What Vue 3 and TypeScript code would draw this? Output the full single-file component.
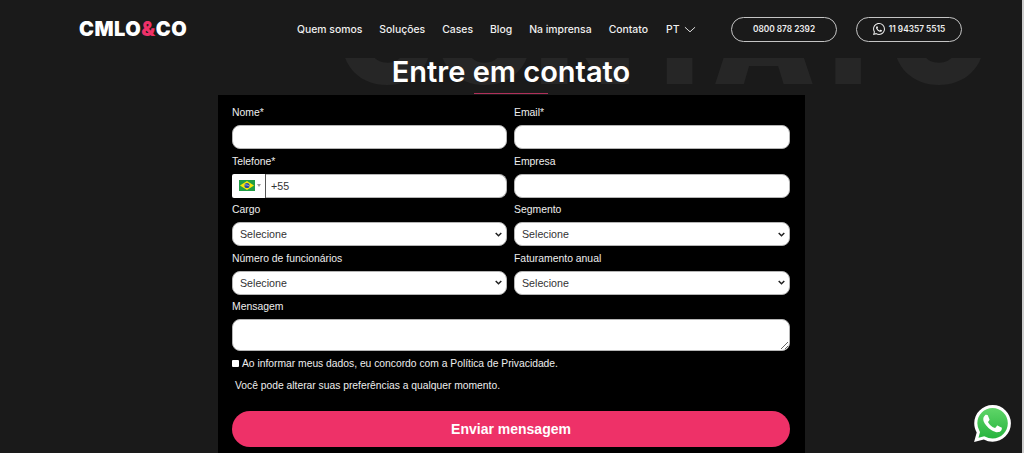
<template>
  <div class="page">
    <div class="watermark" aria-hidden="true"><span>CONTATO</span></div>

    <header class="header">
      <div class="logo">CMLO<span class="amp">&amp;</span>CO</div>
      <nav class="nav">
        <a v-for="item in navItems" :key="item">{{ item }}</a>
        <a class="lang">
          PT
          <svg width="12" height="7" viewBox="0 0 13 7" fill="none">
            <path d="M1 1L6.5 6L12 1" stroke="currentColor" stroke-width="1" />
          </svg>
        </a>
      </nav>
      <div class="phones">
        <a class="phone-btn">0800 878 2392</a>
        <a class="phone-btn">
          <svg width="12" height="12" viewBox="0 0 24 24" fill="currentColor">
            <path :d="phonePath" />
            <path :d="ringPath" />
          </svg>
          11 94357 5515
        </a>
      </div>
    </header>

    <main class="content">
      <h1 class="title">Entre em contato</h1>
      <div class="title-line"></div>

      <form class="form" @submit.prevent>
        <div class="grid">
          <div class="field">
            <label>Nome*</label>
            <input type="text" />
          </div>
          <div class="field">
            <label>Email*</label>
            <input type="email" />
          </div>
          <div class="field">
            <label>Telefone*</label>
            <div class="tel">
              <div class="flag-box">
                <svg width="16" height="11" viewBox="0 0 16 11">
                  <rect width="16" height="11" fill="#229e45" />
                  <path d="M8 1L15 5.5L8 10L1 5.5Z" fill="#f8e509" />
                  <circle cx="8" cy="5.5" r="2.6" fill="#2b49a3" />
                  <path d="M5.5 5C7 4.6 9 5 10.5 6.2" stroke="#fff" stroke-width=".5" fill="none" />
                </svg>
                <span class="flag-caret"></span>
              </div>
              <input type="tel" value="+55" />
            </div>
          </div>
          <div class="field">
            <label>Empresa</label>
            <input type="text" />
          </div>
          <div v-for="name in selects" :key="name" class="field">
            <label>{{ name }}</label>
            <select>
              <option>Selecione</option>
            </select>
          </div>
        </div>

        <div class="field message">
          <label>Mensagem</label>
          <textarea></textarea>
        </div>

        <label class="consent">
          <input type="checkbox" />
          Ao informar meus dados, eu concordo com a Política de Privacidade.
        </label>
        <p class="note">Você pode alterar suas preferências a qualquer momento.</p>

        <button class="submit" type="submit">Enviar mensagem</button>
      </form>
    </main>

    <a class="wa-float">
      <svg width="37" height="37" viewBox="0 0 24 24">
        <defs>
          <linearGradient id="wa" x1="0" y1="0" x2="0" y2="1">
            <stop offset="0" stop-color="#5fd568" />
            <stop offset="1" stop-color="#27b43e" />
          </linearGradient>
        </defs>
        <path :d="ringOuter" fill="#fff" />
        <path :d="ringInner" fill="url(#wa)" />
        <path :d="phonePath" fill="#fff" />
      </svg>
    </a>
  </div>
</template>

<script setup lang="ts">
const navItems = ['Quem somos', 'Soluções', 'Cases', 'Blog', 'Na imprensa', 'Contato'];
const selects = ['Cargo', 'Segmento', 'Número de funcionários', 'Faturamento anual'];

const phonePath =
  'M17.472 14.382c-.297-.149-1.758-.867-2.03-.967-.273-.099-.471-.148-.67.15-.197.297-.767.966-.94 1.164-.173.199-.347.223-.644.075-.297-.15-1.255-.463-2.39-1.475-.883-.788-1.48-1.761-1.653-2.059-.173-.297-.018-.458.13-.606.134-.133.298-.347.446-.52.149-.174.198-.298.298-.497.099-.198.05-.371-.025-.52-.075-.149-.669-1.612-.916-2.207-.242-.579-.487-.5-.669-.51-.173-.008-.371-.01-.57-.01-.198 0-.52.074-.792.372-.272.297-1.04 1.016-1.04 2.479 0 1.462 1.065 2.875 1.213 3.074.149.198 2.096 3.2 5.077 4.487.709.306 1.262.489 1.694.625.712.227 1.36.195 1.871.118.571-.085 1.758-.719 2.006-1.413.248-.694.248-1.289.173-1.413-.074-.124-.272-.198-.57-.347';
const ringInner =
  'M12.051 21.785h-.004a9.87 9.87 0 01-5.031-1.378l-.361-.214-3.741.982.998-3.648-.235-.374a9.86 9.86 0 01-1.51-5.26c.001-5.45 4.436-9.884 9.888-9.884 2.64 0 5.122 1.03 6.988 2.898a9.825 9.825 0 012.893 6.994c-.003 5.45-4.437 9.884-9.885 9.884';
const ringOuter =
  'M20.464 3.488A11.815 11.815 0 0012.05 0C5.495 0 .16 5.335.157 11.892c0 2.096.547 4.142 1.588 5.945L.057 24l6.305-1.654a11.882 11.882 0 005.683 1.448h.005c6.554 0 11.89-5.335 11.893-11.893a11.821 11.821 0 00-3.48-8.413z';
// hollow ring for the small icon in the header button
const ringPath = ringInner + ringOuter;
</script>

<style>
html,
body {
  margin: 0;
  height: 453px;
  overflow: hidden;
  background: #1a1a1a;
}
</style>

<style scoped>
.page {
  position: relative;
  height: 453px;
  overflow: hidden;
  box-sizing: border-box;
  border-right: 2px solid #cdcdcd;
  background: #1a1a1a;
  color: #fff;
  font-family: "Liberation Sans", Arial, sans-serif;
}

/* only the bottom of the big word shows below the header */
.watermark {
  position: absolute;
  left: 337px;
  top: 58px;
  width: 660px;
  height: 32px;
  overflow: hidden;
}

.watermark span {
  display: block;
  margin-top: -86px;
  font-family: Inter, sans-serif;
  font-size: 130px;
  line-height: 1;
  font-weight: 900;
  white-space: nowrap;
  color: #262626;
}

.header {
  position: relative;
  display: flex;
  align-items: center;
  height: 58px;
  box-sizing: border-box;
  padding: 0 60px 0 79px;
  background: #1a1a1a;
  font-family: Inter, sans-serif;
}

.logo {
  width: 108px;
  font-size: 20px;
  font-weight: 900;
  letter-spacing: 0.5px;
  line-height: 1;
  white-space: nowrap;
}

.amp {
  color: #ee3168;
}

.nav {
  display: flex;
  align-items: center;
  gap: 17px;
  margin-left: 110px;
  font-size: 10.4px;
  font-weight: 500;
  color: #f0f0f0;
}

.lang {
  display: flex;
  align-items: center;
  gap: 5px;
  margin-left: 1px;
}

.phones {
  display: flex;
  gap: 19px;
  margin-left: auto;
}

.phone-btn {
  display: flex;
  align-items: center;
  justify-content: center;
  gap: 4px;
  width: 106px;
  height: 25px;
  box-sizing: border-box;
  border: 1px solid #c4c4c4;
  border-radius: 13px;
  font-size: 8.3px;
  font-weight: 600;
  color: #eee;
}

.content {
  position: relative;
  display: flex;
  flex-direction: column;
  align-items: center;
}

.title {
  margin: 0;
  height: 35px;
  font-family: Inter, sans-serif;
  font-size: 29px;
  line-height: 27px;
  font-weight: 600;
  white-space: nowrap;
}

.title-line {
  width: 74px;
  height: 1px;
  margin-bottom: 1px;
  background: #b0305a;
}

.form {
  width: 587px;
  box-sizing: border-box;
  margin-left: 1px;
  padding: 10px 15px 20px 14px;
  background: #000;
}

.grid {
  display: grid;
  grid-template-columns: 275px 276px;
  column-gap: 7px;
}

.field {
  display: flex;
  flex-direction: column;
  height: 48.5px;
}

.field label {
  height: 20px;
  font-size: 10.4px;
  line-height: 16px;
  color: #eee;
}

.field input,
.field select,
.field textarea {
  box-sizing: border-box;
  width: 100%;
  height: 24px;
  margin: 0;
  border: 1px solid #b5b5b5;
  border-radius: 8px;
  background: #fff;
  font-family: "Liberation Sans", Arial, sans-serif;
  font-size: 10.67px;
  color: #333;
}

.field select {
  appearance: none;
  padding: 0 16px 0 7px;
  background: #fff url("data:image/svg+xml,%3Csvg xmlns='http://www.w3.org/2000/svg' width='7' height='5' viewBox='0 0 7 5'%3E%3Cpath d='M.7 1l2.8 2.8L6.3 1' fill='none' stroke='%23222' stroke-width='1.5'/%3E%3C/svg%3E") no-repeat right 4px center;
}

.tel {
  display: flex;
  height: 24px;
}

.flag-box {
  display: flex;
  align-items: center;
  gap: 2px;
  width: 34px;
  box-sizing: border-box;
  padding-left: 7px;
  background: #fff;
  border-right: 1px solid #555;
  border-radius: 2px 0 0 2px;
}

.flag-caret {
  width: 0;
  height: 0;
  border: 2px solid transparent;
  border-top: 3px solid #999;
  border-bottom: 0;
}

.field .tel input {
  flex: 1;
  min-width: 0;
  padding: 0 5px;
  border-radius: 0 8px 8px 0;
  border-left: 0;
}

.message {
  height: 53.5px;
}

.field textarea {
  display: block;
  height: 32px;
}

.consent {
  display: flex;
  align-items: center;
  height: 16px;
  margin-top: 3px;
  font-size: 10.3px;
  color: #eee;
}

.consent input {
  appearance: none;
  width: 7px;
  height: 7px;
  margin: 0 3px 1px 0;
  border-radius: 1px;
  background: #fff;
}

.note {
  margin: 5px 0 0 3px;
  height: 17px;
  font-size: 10.3px;
  line-height: 17px;
  color: #eee;
}

.submit {
  display: block;
  width: 558px;
  height: 36px;
  margin-top: 17px;
  border: 0;
  border-radius: 18px;
  background: #ee3168;
  color: #fff;
  font-family: "Liberation Sans", Arial, sans-serif;
  font-size: 14px;
  font-weight: 700;
}

.wa-float {
  position: absolute;
  right: 11px;
  bottom: 11px;
  display: flex;
}
</style>
